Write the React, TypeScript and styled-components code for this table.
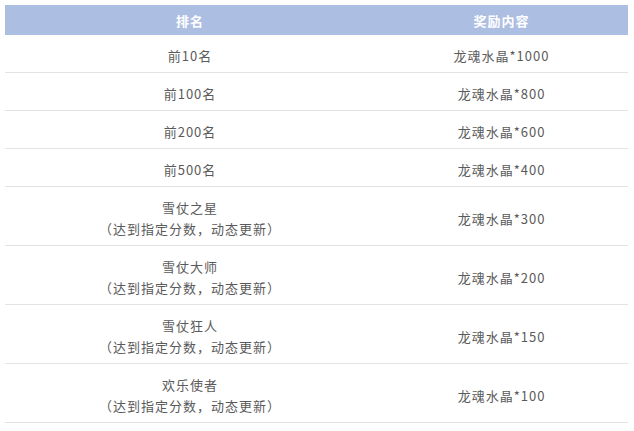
import styled, { createGlobalStyle } from "styled-components";

const GlobalStyle = createGlobalStyle`
  html, body {
    margin: 0;
    padding: 0;
    background: #fff;
  }
  body {
    font-family: "Noto Sans CJK SC", "Noto Sans", sans-serif;
  }
`;

const Wrap = styled.div`
  padding: 5px 6px 0 5px;
`;

const Table = styled.table`
  width: 623px;
  border-collapse: separate;
  border-spacing: 0;
  table-layout: fixed;
  font-size: 13px;
  color: #5a5a5a;
  letter-spacing: 1px;
`;

const HeadCell = styled.th`
  background: #acbee1;
  color: #fff;
  font-weight: bold;
  height: 29px;
  padding: 1px 0 0;
  text-align: center;
  vertical-align: middle;
  line-height: 20px;
`;

const Cell = styled.td`
  padding: 10px 0 6px;
  border-bottom: 1px solid #e2e2e2;
  text-align: center;
  vertical-align: middle;
`;

const Line = styled.div`
  height: 21px;
  line-height: 21px;
  white-space: nowrap;
`;

const rows = [
  { rank: ["前10名"], reward: "龙魂水晶*1000" },
  { rank: ["前100名"], reward: "龙魂水晶*800" },
  { rank: ["前200名"], reward: "龙魂水晶*600" },
  { rank: ["前500名"], reward: "龙魂水晶*400" },
  { rank: ["雪仗之星", "（达到指定分数，动态更新）"], reward: "龙魂水晶*300" },
  { rank: ["雪仗大师", "（达到指定分数，动态更新）"], reward: "龙魂水晶*200" },
  { rank: ["雪仗狂人", "（达到指定分数，动态更新）"], reward: "龙魂水晶*150" },
  { rank: ["欢乐使者", "（达到指定分数，动态更新）"], reward: "龙魂水晶*100" },
];

export default function App() {
  return (
    <Wrap>
      <GlobalStyle />
      <Table>
        <colgroup>
          <col style={{ width: 370 }} />
          <col />
        </colgroup>
        <thead>
          <tr>
            <HeadCell>排名</HeadCell>
            <HeadCell>奖励内容</HeadCell>
          </tr>
        </thead>
        <tbody>
          {rows.map((r, i) => (
            <tr key={i}>
              <Cell>
                {r.rank.map((line, j) => (
                  <Line key={j}>{line}</Line>
                ))}
              </Cell>
              <Cell>
                <Line>{r.reward}</Line>
              </Cell>
            </tr>
          ))}
        </tbody>
      </Table>
    </Wrap>
  );
}
